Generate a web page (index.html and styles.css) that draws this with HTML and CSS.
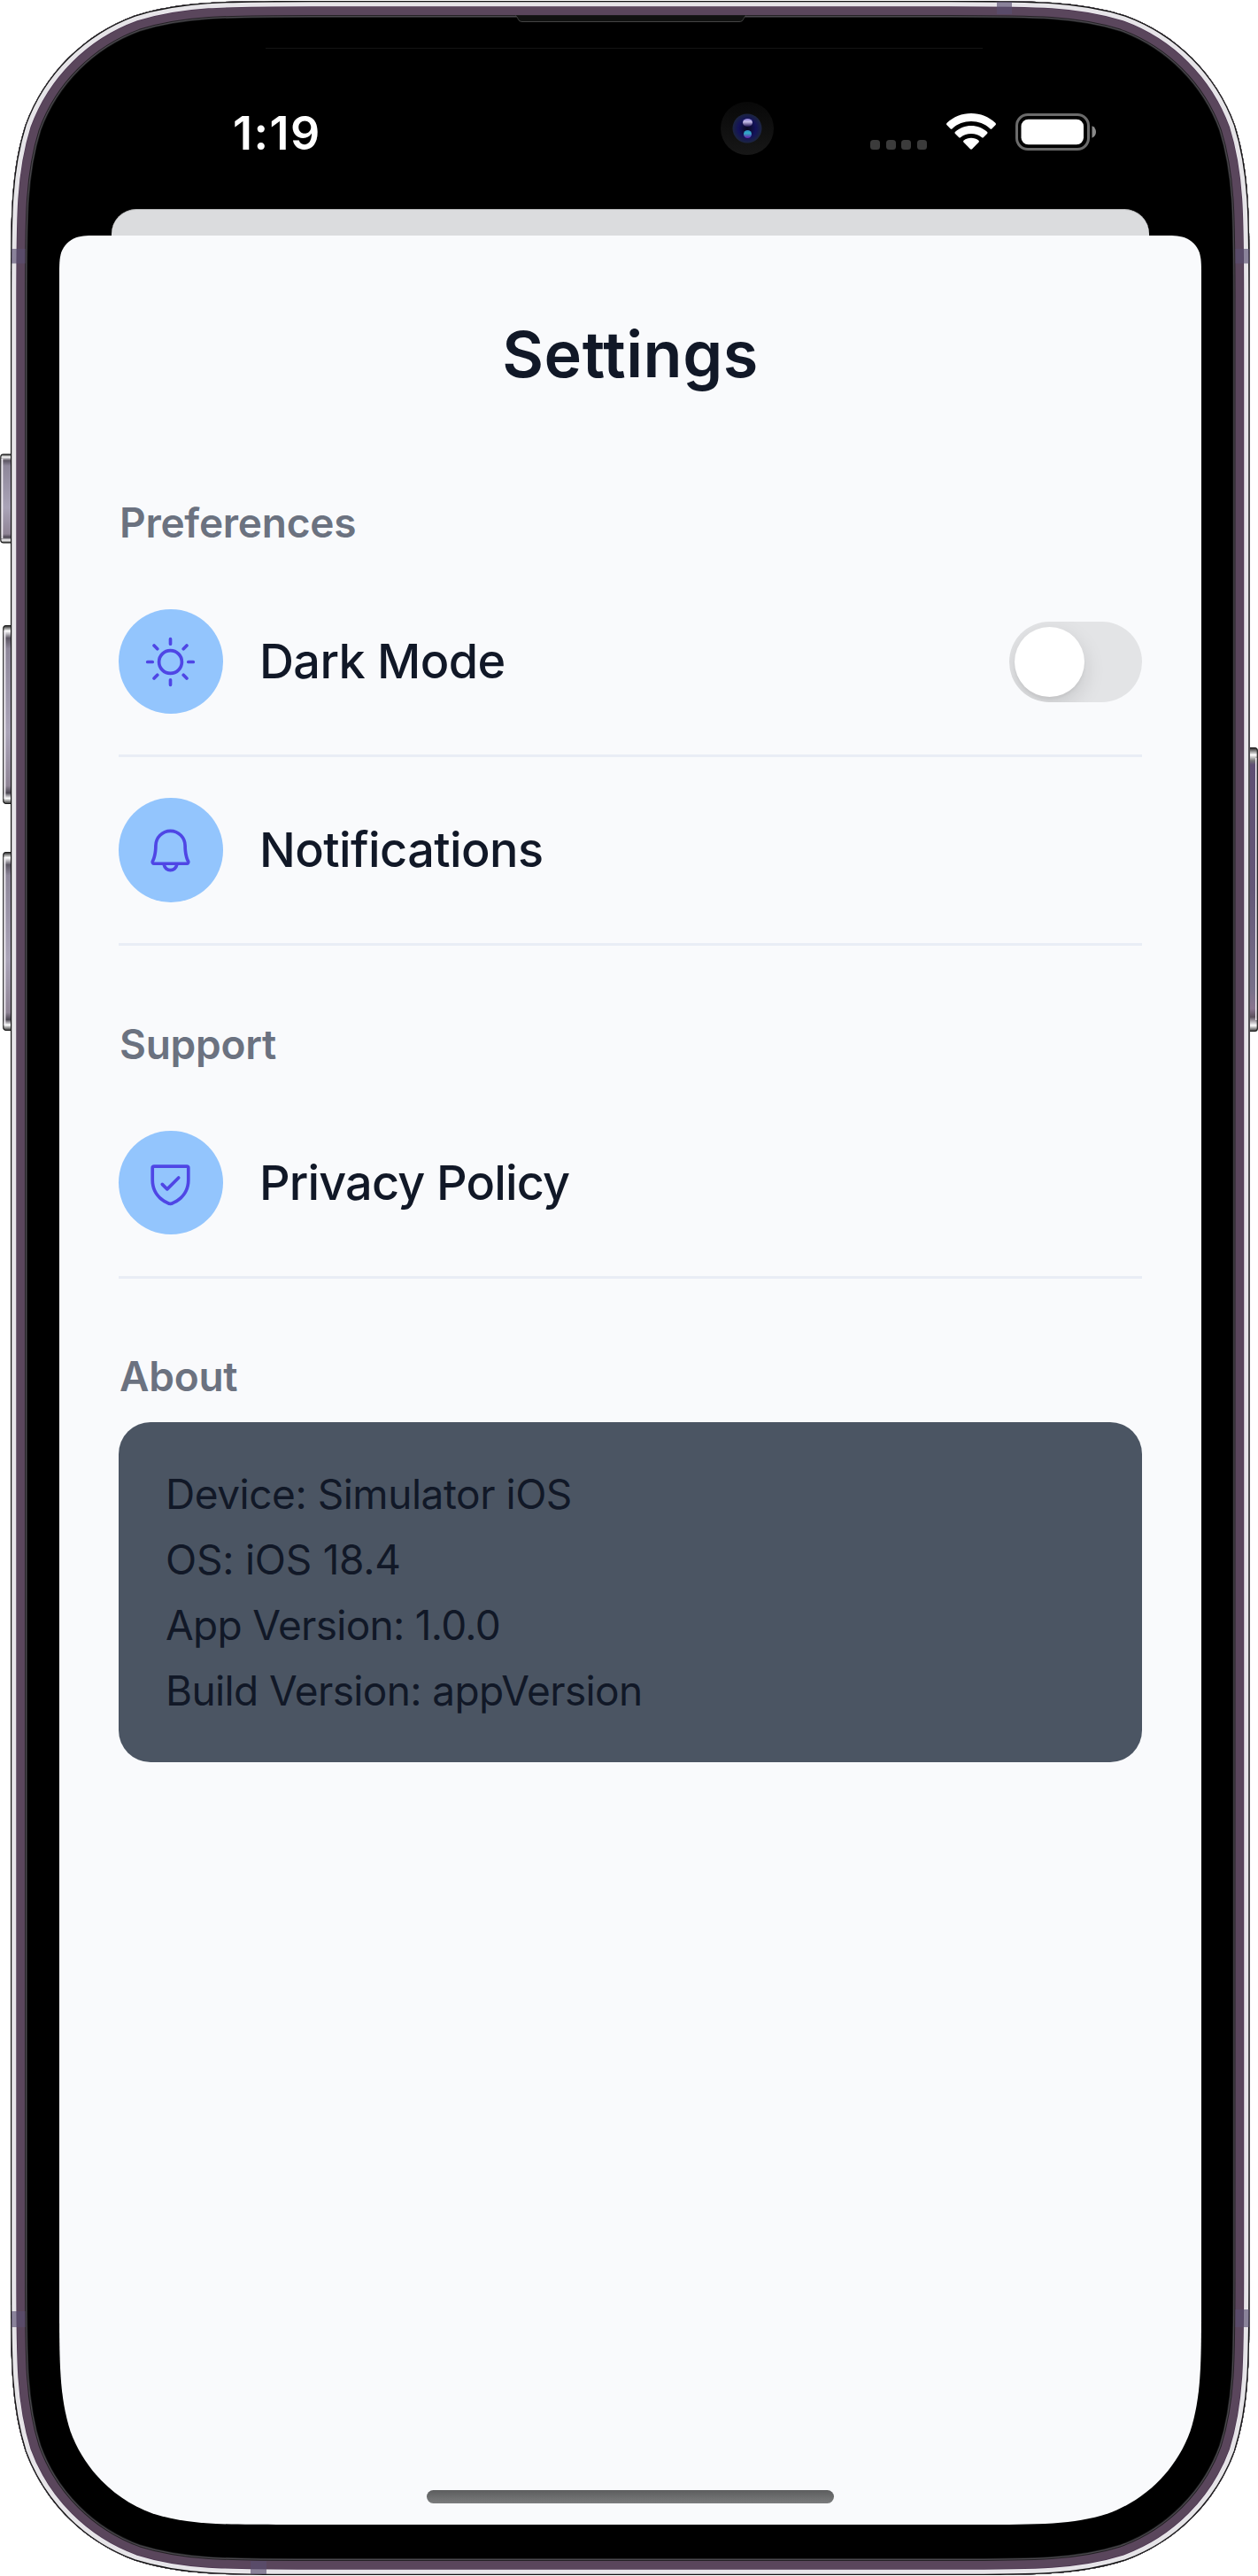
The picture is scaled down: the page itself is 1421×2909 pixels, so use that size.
FILE: index.html
```html
<!DOCTYPE html>
<html lang="en">
<head>
<meta charset="utf-8">
<title>Settings</title>
<link rel="stylesheet" href="styles.css">
</head>
<body>
<div class="device">
  <svg class="frame" viewBox="0 0 1421 2909" aria-hidden="true">
    <defs>
      <path id="body" d="M351.4 1H1072.1C1169.9 1 1218.7 1 1271.3 17.6C1328.7 38.5 1374 83.8 1394.9 141.2C1411.5 193.8 1411.5 242.6 1411.5 340.4V2568.6C1411.5 2666.4 1411.5 2715.2 1394.9 2767.8C1374 2825.2 1328.7 2870.5 1271.3 2891.4C1218.7 2908 1169.9 2908 1072.1 2908H351.4C253.6 2908 204.8 2908 152.2 2891.4C94.8 2870.5 49.5 2825.2 28.6 2767.8C12 2715.2 12 2666.4 12 2568.6V340.4C12 242.6 12 193.8 28.6 141.2C49.5 83.8 94.8 38.5 152.2 17.6C204.8 1 253.6 1 351.4 1Z"/>
      <clipPath id="bodyClip"><use href="#body"/></clipPath>
      <linearGradient id="button" x2="0" y2="1">
        <stop offset="0" stop-color="#222"/><stop offset=".03" stop-color="#fff"/><stop offset=".07" stop-color="#5c5663"/><stop offset=".13" stop-color="#8e879a"/><stop offset=".6" stop-color="#aaa4b8"/><stop offset=".9" stop-color="#8f8495"/><stop offset=".94" stop-color="#4a4550"/><stop offset=".97" stop-color="#fff"/><stop offset="1" stop-color="#333"/>
      </linearGradient>
      <linearGradient id="power" x2="0" y2="1">
        <stop offset="0" stop-color="#222"/><stop offset=".025" stop-color="#fff"/><stop offset=".045" stop-color="#777"/><stop offset=".06" stop-color="#5f4f74"/><stop offset=".5" stop-color="#645778"/><stop offset=".85" stop-color="#77708a"/><stop offset=".92" stop-color="#8a7590"/><stop offset=".95" stop-color="#5a4f5c"/><stop offset=".98" stop-color="#fff"/><stop offset="1" stop-color="#333"/>
      </linearGradient>
      <radialGradient id="lens"><stop offset="0" stop-color="#08081e"/><stop offset=".6" stop-color="#13125a"/><stop offset="1" stop-color="#1c2540"/></radialGradient>
      <linearGradient id="ring" x2="0" y2="1"><stop offset="0" stop-color="#080808"/><stop offset="1" stop-color="#171717"/></linearGradient>
      <linearGradient id="glint" x2="0" y2="1"><stop offset="0" stop-color="#8d80d8"/><stop offset=".4" stop-color="#c4bbe6"/><stop offset="1" stop-color="#1d1050"/></linearGradient>
      <linearGradient id="glow" x2="0" y2="1"><stop offset="0" stop-color="#2f7fc0"/><stop offset=".35" stop-color="#2fb0c8"/><stop offset="1" stop-color="#6a18a8"/></linearGradient>
    </defs>
    <g fill="url(#button)" stroke="#1c1c1c" stroke-width="1.2">
      <rect x=".8" y="513" width="14" height="100" rx="3"/>
      <rect x="3.8" y="706.5" width="12" height="201" rx="3"/>
      <rect x="3.8" y="962.5" width="12" height="201" rx="3"/>
      <rect x="1406" y="844.5" width="14.3" height="320" rx="3" fill="url(#power)"/>
    </g>
    <g fill="#f2eff4">
      <rect x="1.5" y="518" width="1.8" height="90"/><rect x="4.5" y="712" width="1.8" height="190"/><rect x="4.5" y="968" width="1.8" height="190"/><rect x="1418" y="856" width="1.5" height="296"/>
    </g>
    <use href="#body"/>
    <g clip-path="url(#bodyClip)" fill="none">
      <use href="#body" stroke="#1b1b1d" stroke-width="38"/>
      <use href="#body" stroke="#4a484d" stroke-width="36.5"/>
      <use href="#body" stroke="#232024" stroke-width="34"/>
      <use href="#body" stroke="#5a465c" stroke-width="32"/>
      <use href="#body" stroke="#4c3550" stroke-width="14"/>
      <use href="#body" stroke="#e6e4e8" stroke-width="12.6"/>
      <use href="#body" stroke="#111" stroke-width="2.4"/>
      <g fill="#594e70" fill-opacity=".65">
        <rect x="13" y="281" width="15.5" height="16.5"/><rect x="1395.5" y="281" width="15.5" height="16.5"/>
        <rect x="13" y="2610" width="15.5" height="18"/><rect x="1395.5" y="2608" width="15.5" height="20"/>
        <rect x="1126" y="2" width="17" height="14"/><rect x="283" y="2892" width="18" height="15"/>
      </g>
    </g>
    <path d="M582.5 17.5C585.5 19.5 584.5 24.5 590 24.5H835C840.5 24.5 839.500 19.500 842.500 17.500" fill="#111211" stroke="#444"/>
    <path d="M300 54.5H1110" stroke="#131313"/>
    <circle cx="844" cy="145" r="30" fill="url(#ring)"/>
    <circle cx="844" cy="145" r="16.5" fill="url(#lens)"/>
    <ellipse cx="844.5" cy="138.5" rx="5.5" ry="4.5" fill="url(#glint)"/>
    <circle cx="844.5" cy="151.5" r="4.5" fill="url(#glow)"/>
  </svg>

  <div class="screen">
    <div class="status">
      <span class="time">1:19</span>
      <div class="indicators">
        <div class="dots"><i></i><i></i><i></i><i></i></div>
        <svg class="wifi" viewBox="0 0 56 41" fill="#fff">
          <path d="M28 0C38.5 0 48 4 55.3 10.7C56.2 11.6 56.2 12.5 55.4 13.3L51.5 17.2C50.8 17.9 50.1 17.9 49.3 17.2C43.5 11.9 36 9.1 28 9.1S12.5 11.9 6.7 17.2C5.9 17.9 5.2 17.9 4.5 17.2L.6 13.3C-.2 12.5-.2 11.6.7 10.7C8 4 17.5 0 28 0Z"/>
          <path d="M28 14C34.8 14 41 16.5 45.9 20.7C46.7 21.5 46.7 22.3 46 23.1L42 27C41.3 27.7 40.6 27.7 39.8 27C36.6 24.4 32.5 22.9 28 22.9S19.4 24.4 16.2 27C15.4 27.7 14.7 27.7 14 27L10 23.1C9.3 22.3 9.3 21.5 10.1 20.7C15 16.5 21.2 14 28 14Z"/>
          <path d="M28 27.7C31.2 27.7 34 28.7 36.3 30.5C37.1 31.3 37.1 32 36.4 32.8L29.3 40C28.4 40.9 27.6 40.9 26.7 40L19.6 32.8C18.9 32 18.9 31.3 19.7 30.5C22 28.7 24.8 27.7 28 27.7Z"/>
        </svg>
        <svg class="battery" viewBox="0 0 92 42">
          <rect x="1.5" y="1.5" width="81" height="39" rx="12.5" fill="none" stroke="#6b6b6b" stroke-width="3"/>
          <rect x="6.5" y="6.7" width="70.5" height="28.6" rx="8" fill="#fff"/>
          <path d="M86.500 14.300C92.500 16.500 92.500 25.500 86.500 27.700Z" fill="#8a8a8a"/>
        </svg>
      </div>
    </div>

    <div class="backdrop"></div>

    <main class="sheet">
      <h1 class="title">Settings</h1>

      <h2 class="heading heading-first">Preferences</h2>
      <div class="row">
        <span class="badge"><svg viewBox="0 0 256 256" fill="none" stroke="currentColor" stroke-width="16" stroke-linecap="round"><circle cx="128" cy="128" r="56"/><path d="M128 40V16M64 64 48 48M64 192l-16 16M192 64l16-16M192 192l16 16M40 128H16M128 216v24M216 128h24"/></svg></span>
        <span class="label">Dark Mode</span>
        <span class="switch"><span class="knob"></span></span>
      </div>
      <div class="row">
        <span class="badge"><svg viewBox="0 0 256 256" fill="currentColor"><path d="M221.8 175.94C216.25 166.38 208 139.33 208 104a80 80 0 1 0-160 0c0 35.34-8.26 62.38-13.81 71.94A16 16 0 0 0 48 200H88.81a40 40 0 0 0 78.38 0H208a16 16 0 0 0 13.8-24.06ZM128 216a24 24 0 0 1-22.62-16h45.24A24 24 0 0 1 128 216ZM48 184c7.7-13.24 16-43.92 16-80a64 64 0 1 1 128 0c0 36.05 8.28 66.73 16 80Z"/></svg></span>
        <span class="label">Notifications</span>
      </div>

      <h2 class="heading">Support</h2>
      <div class="row">
        <span class="badge"><svg viewBox="0 0 256 256" fill="currentColor"><path d="M208 40H48A16 16 0 0 0 32 56v58.77c0 89.62 75.82 119.34 91 124.39a15.53 15.53 0 0 0 10 0c15.2-5.05 91-34.77 91-124.39V56A16 16 0 0 0 208 40Zm0 74.79c0 78.42-66.35 104.62-80 109.18-13.53-4.51-80-30.69-80-109.18V56H208ZM82.34 141.66a8 8 0 0 1 11.32-11.32L112 148.68l50.34-50.34a8 8 0 0 1 11.32 11.32l-56 56a8 8 0 0 1-11.32 0Z"/></svg></span>
        <span class="label label-long">Privacy Policy</span>
      </div>

      <h2 class="heading">About</h2>
      <div class="card">
        <p class="device-name">Device: Simulator iOS</p>
        <p class="os">OS: iOS 18.4</p>
        <p class="version">App Version: 1.0.0</p>
        <p class="build">Build Version: appVersion</p>
      </div>
      <div class="home"></div>
    </main>
  </div>
</div>
</body>
</html>
```
FILE: styles.css
```css
* { box-sizing: border-box; }

body {
  margin: 0;
  background: #fff;
  font-family: Inter, "Liberation Sans", sans-serif;
  color: #111827;
}

h1, h2, p { margin: 0; }

.device {
  display: grid;
  width: 1421px;
  height: 2909px;
  overflow: hidden;
}

/* The phone body and the screen share one grid cell. */
.frame, .screen { grid-area: 1 / 1; }
.frame { width: 1421px; height: 2909px; display: block; }

.screen {
  display: flex;
  flex-direction: column;
  width: 1290px;
  margin-left: 67px;
}

.status {
  display: flex;
  justify-content: space-between;
  height: 236px;
  padding: 128px 118px 0 196px;
}

.time {
  color: #fff;
  font-size: 52px;
  font-weight: 600;
  line-height: 46px;
  letter-spacing: 1.5px;
}

.indicators { display: flex; align-items: flex-start; }
.dots { display: flex; gap: 6.6px; padding-top: 30px; margin-right: 22px; }
.dots i { width: 10.9px; height: 11px; border-radius: 3.5px; background: #3b3b3b; }
.wifi { width: 56px; height: 41px; margin-right: 22.5px; }
.battery { width: 92px; height: 42px; }

.backdrop {
  height: 30px;
  margin: 0 59px;
  border-top: 1px solid #b5b6b7;
  border-radius: 28px 28px 0 0;
  background: #dbdcde;
}

.sheet {
  display: flex;
  flex-direction: column;
  height: 2585px;
  padding: 80px 67px 24px;
  background: #f9fafc;
  clip-path: path("M45.9 0H1244.1C1257.3 0 1263.9 0 1271.1 2.2C1278.8 5.1 1284.9 11.2 1287.8 18.9C1290 26.1 1290 32.7 1290 45.9V2329.7C1290 2403.2 1290 2440 1277.5 2479.5C1261.8 2522.7 1227.7 2556.8 1184.5 2572.5C1145 2585 1108.2 2585 1034.7 2585H255.3C181.8 2585 145 2585 105.5 2572.5C62.3 2556.8 28.2 2522.7 12.5 2479.5C0 2440 0 2403.2 0 2329.7V45.9C0 32.7 0 26.1 2.2 18.9C5.1 11.2 11.2 5.1 18.9 2.2C26.1 0 32.7 0 45.9 0Z");
}

.title {
  font-size: 72px;
  font-weight: 600;
  line-height: 108px;
  letter-spacing: .5px;
  text-align: center;
}

.heading {
  margin: 74.5px 0 16px;
  padding-left: 1px;
  color: #6b7280;
  font-size: 46px;
  font-weight: 600;
  line-height: 72px;
  letter-spacing: -.25px;
}
.heading-first { margin-top: 100px; }

.row {
  display: flex;
  align-items: center;
  height: 213px;
  border-bottom: 3px solid #e9edf5;
}

.badge {
  display: grid;
  place-items: center;
  width: 117.5px;
  height: 117.5px;
  margin-right: 41.5px;
  border-radius: 50%;
  background: #93c5fd;
  color: #4f46e5;
}
.badge svg { width: 59px; height: 59px; }

.label {
  font-size: 54px;
  font-weight: 500;
  line-height: 80px;
  letter-spacing: -.6px;
}
.label-long { letter-spacing: -.85px; }

.switch {
  display: flex;
  width: 150px;
  height: 91px;
  margin-left: auto;
  padding: 6px;
  border-radius: 46px;
  overflow: hidden;
  background: #e3e4e6;
}
.knob {
  width: 79px;
  height: 79px;
  border-radius: 50%;
  background: #fff;
  box-shadow: 0 9px 24px rgba(0, 0, 0, .13), 0 3px 3px rgba(0, 0, 0, .04);
}

.card {
  height: 384px;
  padding: 44px 53px;
  border-radius: 36px;
  background: #4b5563;
  font-size: 46px;
  line-height: 74px;
}
.device-name { letter-spacing: -.47px; }
.os { letter-spacing: -.25px; }
.version { letter-spacing: -.7px; }
.build { letter-spacing: -.62px; }

.home {
  width: 460px;
  height: 15px;
  margin: auto auto 0;
  border-radius: 8px;
  background: linear-gradient(#5c5d5e, #7b7c7d);
}
```
